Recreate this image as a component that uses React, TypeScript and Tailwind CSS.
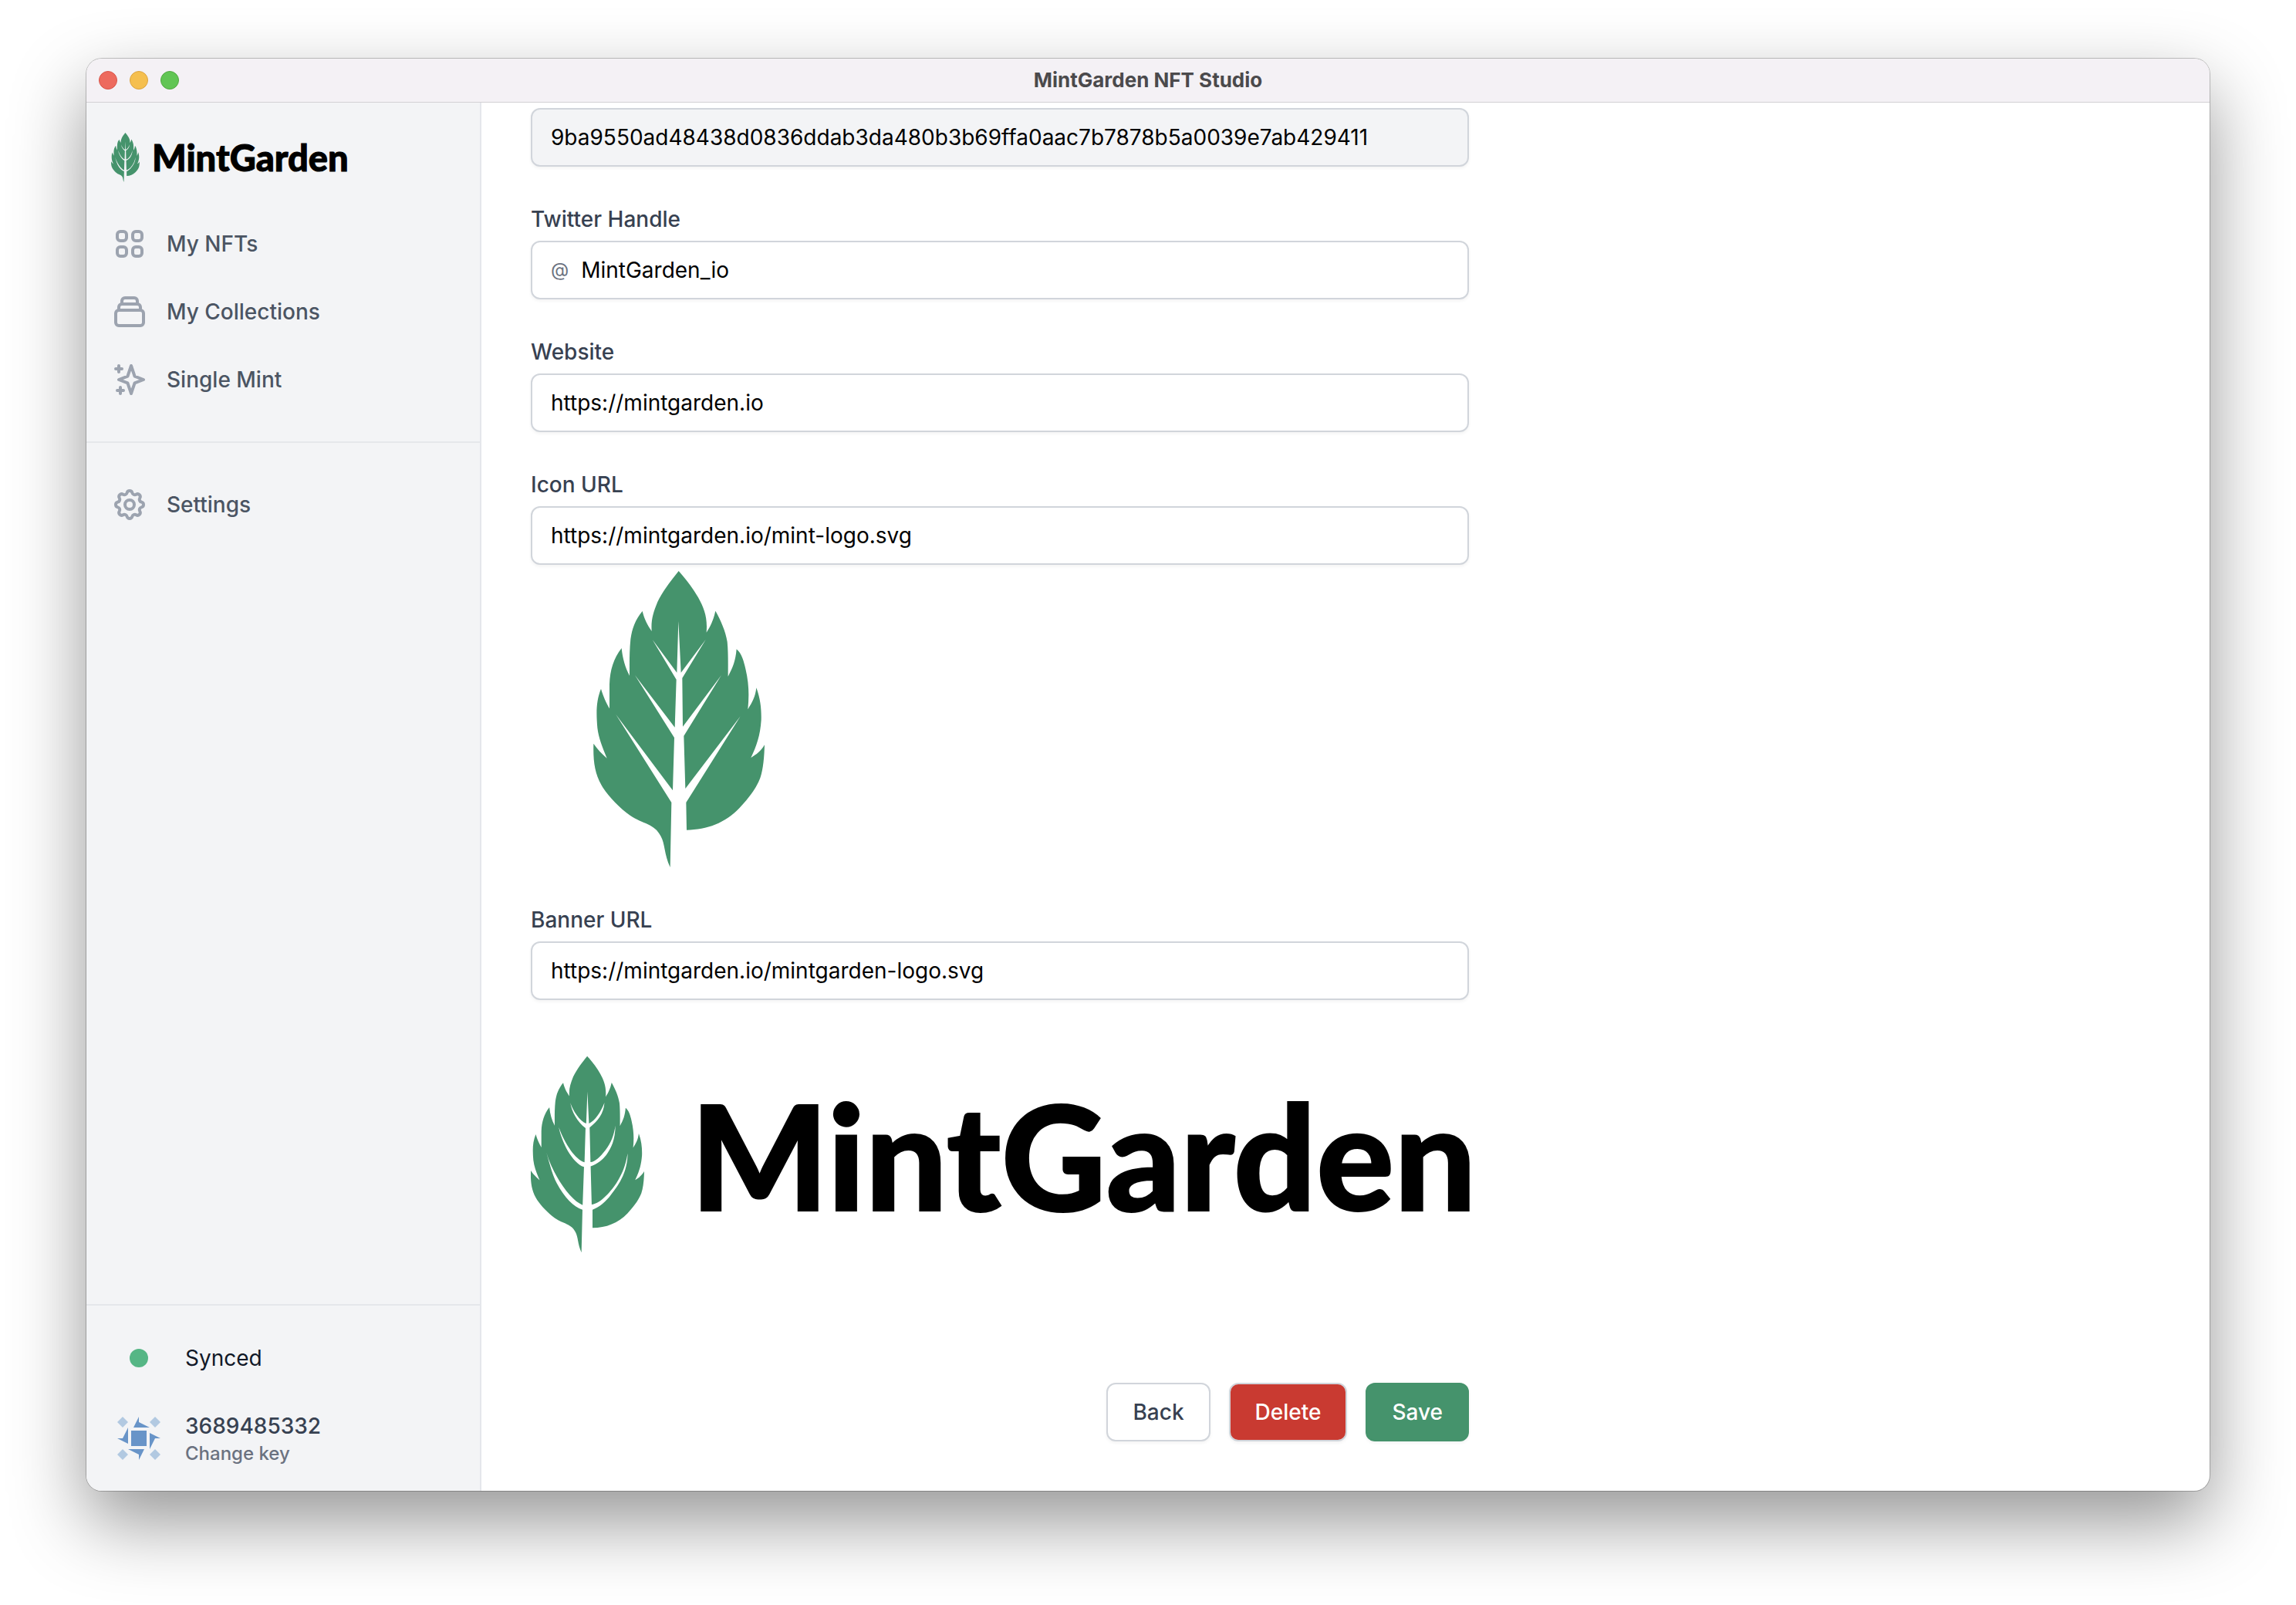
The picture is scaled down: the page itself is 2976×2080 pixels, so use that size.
import React from "react";
import {
  HiOutlineViewGrid,
  HiOutlineCollection,
  HiOutlineSparkles,
  HiOutlineCog,
} from "react-icons/hi";

const RIGHT_EDGE =
  "M419 60C450 95 478 133 495 163C518 205 532 240 527 299C542 275 553 255 562 215C582 250 602 295 608 335C612 375 611 420 611 470C630 435 640 410 644 364C664 380 672 410 679 440C693 500 693 545 688 598C705 570 717 550 721 514C738 560 741 600 740 640C736 700 722 740 700 786C722 772 738 762 753 736C752 780 748 830 736 865C718 912 680 955 655 982C600 1040 530 1066 450 1067";
const LEFT_EDGE =
  "C362 1160 366 1120 350 1092C325 1040 280 1045 230 1010C190 982 150 940 125 903C92 850 86 800 88 731C102 752 120 770 140 788C122 745 108 710 103 670C98 610 98 565 117 518C126 548 136 570 150 595V500C152 445 166 400 197 360C201 400 211 435 228 467C228 420 227 375 232 325C238 283 250 250 278 216C286 250 298 270 314 294C311 250 320 222 337 180C360 133 395 90 419 60Z";

const STRAIGHT_VEINS =
  "L448 960L659 625L445 906L439 701L585 465L435 665L433 476L524 327L428 455L418 255L412 455L317 327L410 482L404 668L249 465L402 708L396 913L175 618L391 960L386 1212";
const CURVED_VEINS =
  "L450 961C490 945 530 912 560 870C600 820 655 745 656 630C645 690 635 730 590 805C550 865 490 928 445 930L439 706C480 692 510 665 530 640C560 600 583 550 584 467C575 525 560 565 525 612C495 650 465 680 438 681L433 479C480 440 515 400 520 333C500 385 465 440 429 455L420 268L413 455C375 442 335 380 320 334C328 385 360 445 409 482L403 682C350 665 290 580 252 476C270 565 330 685 400 710L392 933C320 905 220 760 180 627C205 715 215 755 240 805C285 890 340 945 391 961L385 1212";

const MARK_CURVED = RIGHT_EDGE + CURVED_VEINS + LEFT_EDGE;
const MARK_STRAIGHT = RIGHT_EDGE + STRAIGHT_VEINS + LEFT_EDGE;

function LeafMark({ className }: { className: string }) {
  return (
    <svg viewBox="88 60 665 1152" className={className} aria-hidden="true">
      <path d={MARK_CURVED} fill="#45936c" />
    </svg>
  );
}

function KeyAvatar() {
  return (
    <svg viewBox="0 0 56 56" className="size-14" aria-hidden="true">
      {[0, 90, 180, 270].map((angle) => (
        <g key={angle} transform={`rotate(${angle} 28 28)`}>
          <path d="M7 0L14 7L7 14L0 7Z" fill="#b2c9e1" />
          <path d="M28 0V7L42 14H21Z" fill="#6894c8" />
        </g>
      ))}
      <path d="M18 18H38V38H18Z" fill="#6894c8" />
    </svg>
  );
}

const NAV = [
  { label: "My NFTs", Icon: HiOutlineViewGrid },
  { label: "My Collections", Icon: HiOutlineCollection },
  { label: "Single Mint", Icon: HiOutlineSparkles },
];

function NavLink({ label, Icon }: { label: string; Icon: React.ElementType }) {
  return (
    <a
      href="#"
      className="flex items-center gap-6 rounded-xl p-4 text-[28px] leading-10 font-medium text-[#4b5563]"
    >
      <Icon className="size-12 text-[#9ca3af]" />
      {label}
    </a>
  );
}

function Sidebar() {
  return (
    <aside className="flex w-[512px] shrink-0 flex-col border-r-2 border-[#e5e7eb] bg-[#f3f4f6]">
      <div className="mt-10 flex h-16 items-center gap-4 px-8">
        <LeafMark className="h-16 w-[37px]" />
        <span className="font-['Lato'] text-[47px] leading-[60px] font-black text-black [-webkit-text-stroke:1px_#000]">
          MintGarden
        </span>
      </div>
      <nav className="mt-10 flex flex-col">
        <div className="flex flex-col gap-2 px-4 pb-10">
          {NAV.map((item) => (
            <NavLink key={item.label} {...item} />
          ))}
        </div>
        <div className="border-t-2 border-[#e5e7eb] px-4 pt-10">
          <NavLink label="Settings" Icon={HiOutlineCog} />
        </div>
      </nav>
      <div className="mt-auto flex flex-col gap-12 border-t-2 border-[#e5e7eb] px-10 pt-12 pb-8">
        <div className="flex items-center gap-8">
          <div className="flex w-14 justify-center">
            <span className="size-6 rounded-full bg-[#55b685]" />
          </div>
          <span className="text-[28px] leading-10 text-[#111827]">Synced</span>
        </div>
        <a href="#" className="flex items-center gap-8">
          <KeyAvatar />
          <span className="flex flex-col">
            <span className="text-[28px] leading-10 font-medium text-[#374151]">3689485332</span>
            <span className="text-[24px] leading-8 font-medium text-[#6b7280]">Change key</span>
          </span>
        </a>
      </div>
    </aside>
  );
}

type FieldProps = {
  id: string;
  label?: string;
  value: string;
  prefix?: string;
  disabled?: boolean;
};

function Field({ id, label, value, prefix, disabled }: FieldProps) {
  return (
    <div className="flex flex-col gap-2">
      {label && (
        <label htmlFor={id} className="text-[28px] leading-10 font-medium text-[#374151]">
          {label}
        </label>
      )}
      <div
        className={
          disabled
            ? "flex h-[76px] items-center gap-4 rounded-xl border-2 border-[#d1d5db] bg-[#f3f4f6] px-6 shadow-[0_2px_4px_rgba(0,0,0,0.05)]"
            : "flex h-[76px] items-center gap-4 rounded-xl border-2 border-[#d1d5db] bg-white px-6 shadow-[0_2px_4px_rgba(0,0,0,0.05)]"
        }
      >
        {prefix && <span className="text-[24px] leading-10 text-[#6b7280]">{prefix}</span>}
        <input
          id={id}
          type="text"
          defaultValue={value}
          readOnly={disabled}
          aria-label={label ?? "Collection ID"}
          className="min-w-0 flex-1 bg-transparent text-[28px] leading-10 text-black outline-none"
        />
      </div>
    </div>
  );
}

export default function App() {
  return (
    <div className="min-h-screen bg-white px-28 pt-19 pb-37 font-['Inter',sans-serif]">
      <div className="flex min-h-[1856px] flex-col overflow-hidden rounded-[20px] bg-white shadow-[0_0_0_1px_rgba(0,0,0,0.22),0_40px_96px_rgba(0,0,0,0.42)]">
        <header className="relative flex h-14 shrink-0 items-center bg-[#f4f1f5] px-4 shadow-[0_1px_0_#d3d1d4]">
          <div className="flex flex-1 gap-4">
            <span className="size-6 rounded-full border border-[#d8554a] bg-[#ed6a5e]" />
            <span className="size-6 rounded-full border border-[#dba340] bg-[#f5bf4f]" />
            <span className="size-6 rounded-full border border-[#52a842] bg-[#61c554]" />
          </div>
          <h1 className="text-[26px] leading-8 font-bold text-[#4b4a4c]">MintGarden NFT Studio</h1>
          <div className="flex-1" />
        </header>
        <div className="flex flex-1">
          <Sidebar />
          <main className="min-w-0 flex-1 px-16 pt-2 pb-16">
            <form className="flex max-w-[1216px] flex-col" onSubmit={(e) => e.preventDefault()}>
              <div className="flex flex-col gap-12">
                <Field
                  id="collection-id"
                  value="9ba9550ad48438d0836ddab3da480b3b69ffa0aac7b7878b5a0039e7ab429411"
                  disabled
                />
                <Field id="twitter" label="Twitter Handle" value="MintGarden_io" prefix="@" />
                <Field id="website" label="Website" value="https://mintgarden.io" />
                <div className="flex flex-col gap-2">
                  <Field id="icon-url" label="Icon URL" value="https://mintgarden.io/mint-logo.svg" />
                  <svg
                    viewBox="-156 60 1152 1152"
                    className="size-96"
                    role="img"
                    aria-label="Icon preview"
                  >
                    <path d={MARK_STRAIGHT} fill="#45936c" />
                  </svg>
                </div>
                <div className="flex flex-col gap-2">
                  <Field
                    id="banner-url"
                    label="Banner URL"
                    value="https://mintgarden.io/mintgarden-logo.svg"
                  />
                  <div className="flex h-96 items-center gap-15">
                    <LeafMark className="h-64 w-[147px] shrink-0" />
                    <span className="font-['Lato'] text-[188px] leading-[240px] font-black text-black [-webkit-text-stroke:2px_#000]">
                      MintGarden
                    </span>
                  </div>
                </div>
              </div>
              <div className="mt-[104px] flex justify-end gap-6">
                <button
                  type="button"
                  className="rounded-xl border-2 border-[#d1d5db] bg-white px-8 py-4 text-[28px] leading-10 font-medium text-[#374151] shadow-[0_2px_4px_rgba(0,0,0,0.05)]"
                >
                  Back
                </button>
                <button
                  type="button"
                  className="rounded-xl border-2 border-[#d1d5db] bg-[#c93a31] px-8 py-4 text-[28px] leading-10 font-medium text-white shadow-[0_2px_4px_rgba(0,0,0,0.05)]"
                >
                  Delete
                </button>
                <button
                  type="submit"
                  className="rounded-xl border-2 border-[#45936c] bg-[#45936c] px-8 py-4 text-[28px] leading-10 font-medium text-white shadow-[0_2px_4px_rgba(0,0,0,0.05)]"
                >
                  Save
                </button>
              </div>
            </form>
          </main>
        </div>
      </div>
    </div>
  );
}
